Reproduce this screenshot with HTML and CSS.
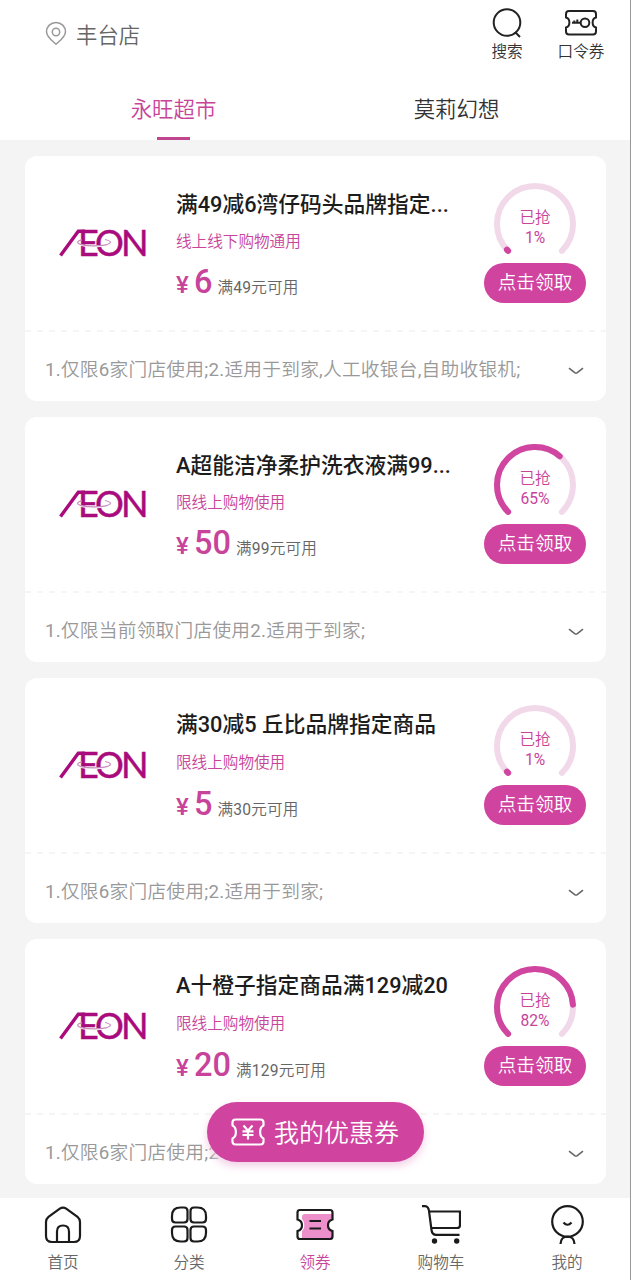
FILE: index.html
```html
<!DOCTYPE html>
<html lang="zh-CN">
<head>
<meta charset="utf-8">
<title>领券</title>
<link rel="stylesheet" href="styles.css">
</head>
<body>
<div class="app">
  <header class="header">
    <div class="topbar">
      <div class="store">
        <svg class="pin" viewBox="0 0 22 25"><path d="M11 23.200C7 19.500 1.500 15.800 1.500 10.700A9.500 9.300 0 0 1 20.500 10.700C20.500 15.800 15 19.500 11 23.200Z"/><circle cx="11" cy="11" r="3.700"/></svg>
        <span>丰台店</span>
      </div>
      <div class="actions">
        <a class="action">
          <svg class="action-icon" viewBox="0 0 32 32"><circle cx="16" cy="14.500" r="13.300"/><path d="M24 24L29 29"/></svg>
          <span>搜索</span>
        </a>
        <a class="action">
          <svg class="action-icon" viewBox="0 0 32 32"><path d="M4 3H28Q31 3 31 6V9.500C26.500 10.500 26.500 18.500 31 19.500V23.500Q31 26.500 28 26.500H4Q1 26.500 1 23.500V19.500C5.500 18.500 5.500 10.500 1 9.500V6Q1 3 4 3Z"/><circle cx="20" cy="14.800" r="4.300"/><path d="M7 14.800H15.500M9.300 14.500V12.500M12.300 14.500V11.500"/></svg>
          <span>口令券</span>
        </a>
      </div>
    </div>
    <nav class="tabs">
      <a class="tab tab-active">永旺超市</a>
      <a class="tab">莫莉幻想</a>
    </nav>
  </header>

  <main class="list">
    <article class="card">
      <div class="card-main">
        <svg class="logo" viewBox="0 0 92 32" aria-label="ÆON"><path class="logo-slash" d="M2.500 28.500L20.300 4.300H27"/><text x="20 37 63" y="28.500">EON</text><path class="logo-halo" d="M19.500 16C23 20.500 49 20.500 52.500 16"/><path class="logo-ring" d="M24 12.800C18 14 18.500 16.500 24 17.800C30 19.300 42 19.300 48 17.800C54 16.300 54 14 47 12.500"/></svg>
        <div class="info">
          <h2 class="title title-cut">满49减6湾仔码头品牌指定...</h2>
          <p class="scope">线上线下购物通用</p>
          <p class="price"><span class="yen">¥</span><strong>6</strong><span class="rule">满49元可用</span></p>
        </div>
        <div class="claim">
          <div class="gauge">
            <svg viewBox="0 0 84 84"><path class="track" d="M15.100 68.900A38 38 0 1 1 68.900 68.900"/><path class="fill" pathLength="100" stroke-dasharray="1 200" d="M15.100 68.900A38 38 0 1 1 68.900 68.900"/></svg>
            <p>已抢<br>1%</p>
          </div>
          <button class="get">点击领取</button>
        </div>
      </div>
      <div class="terms"><span>1.仅限6家门店使用;2.适用于到家,人工收银台,自助收银机;</span><svg class="chevron" viewBox="0 0 18 10"><path d="M2 2.200L7.700 6.600Q9 7.500 10.300 6.600L16 2.200"/></svg></div>
    </article>

    <article class="card">
      <div class="card-main">
        <svg class="logo" viewBox="0 0 92 32" aria-label="ÆON"><path class="logo-slash" d="M2.500 28.500L20.300 4.300H27"/><text x="20 37 63" y="28.500">EON</text><path class="logo-halo" d="M19.500 16C23 20.500 49 20.500 52.500 16"/><path class="logo-ring" d="M24 12.800C18 14 18.500 16.500 24 17.800C30 19.300 42 19.300 48 17.800C54 16.300 54 14 47 12.500"/></svg>
        <div class="info">
          <h2 class="title title-cut">A超能洁净柔护洗衣液满99...</h2>
          <p class="scope">限线上购物使用</p>
          <p class="price"><span class="yen">¥</span><strong>50</strong><span class="rule">满99元可用</span></p>
        </div>
        <div class="claim">
          <div class="gauge">
            <svg viewBox="0 0 84 84"><path class="track" d="M15.100 68.900A38 38 0 1 1 68.900 68.900"/><path class="fill" pathLength="100" stroke-dasharray="65 200" d="M15.100 68.900A38 38 0 1 1 68.900 68.900"/></svg>
            <p>已抢<br>65%</p>
          </div>
          <button class="get">点击领取</button>
        </div>
      </div>
      <div class="terms"><span>1.仅限当前领取门店使用2.适用于到家;</span><svg class="chevron" viewBox="0 0 18 10"><path d="M2 2.200L7.700 6.600Q9 7.500 10.300 6.600L16 2.200"/></svg></div>
    </article>

    <article class="card">
      <div class="card-main">
        <svg class="logo" viewBox="0 0 92 32" aria-label="ÆON"><path class="logo-slash" d="M2.500 28.500L20.300 4.300H27"/><text x="20 37 63" y="28.500">EON</text><path class="logo-halo" d="M19.500 16C23 20.500 49 20.500 52.500 16"/><path class="logo-ring" d="M24 12.800C18 14 18.500 16.500 24 17.800C30 19.300 42 19.300 48 17.800C54 16.300 54 14 47 12.500"/></svg>
        <div class="info">
          <h2 class="title">满30减5 丘比品牌指定商品</h2>
          <p class="scope">限线上购物使用</p>
          <p class="price"><span class="yen">¥</span><strong>5</strong><span class="rule">满30元可用</span></p>
        </div>
        <div class="claim">
          <div class="gauge">
            <svg viewBox="0 0 84 84"><path class="track" d="M15.100 68.900A38 38 0 1 1 68.900 68.900"/><path class="fill" pathLength="100" stroke-dasharray="1 200" d="M15.100 68.900A38 38 0 1 1 68.900 68.900"/></svg>
            <p>已抢<br>1%</p>
          </div>
          <button class="get">点击领取</button>
        </div>
      </div>
      <div class="terms"><span>1.仅限6家门店使用;2.适用于到家;</span><svg class="chevron" viewBox="0 0 18 10"><path d="M2 2.200L7.700 6.600Q9 7.500 10.300 6.600L16 2.200"/></svg></div>
    </article>

    <article class="card">
      <div class="card-main">
        <svg class="logo" viewBox="0 0 92 32" aria-label="ÆON"><path class="logo-slash" d="M2.500 28.500L20.300 4.300H27"/><text x="20 37 63" y="28.500">EON</text><path class="logo-halo" d="M19.500 16C23 20.500 49 20.500 52.500 16"/><path class="logo-ring" d="M24 12.800C18 14 18.500 16.500 24 17.800C30 19.300 42 19.300 48 17.800C54 16.300 54 14 47 12.500"/></svg>
        <div class="info">
          <h2 class="title">A十橙子指定商品满129减20</h2>
          <p class="scope">限线上购物使用</p>
          <p class="price"><span class="yen">¥</span><strong>20</strong><span class="rule">满129元可用</span></p>
        </div>
        <div class="claim">
          <div class="gauge">
            <svg viewBox="0 0 84 84"><path class="track" d="M15.100 68.900A38 38 0 1 1 68.900 68.900"/><path class="fill" pathLength="100" stroke-dasharray="82 200" d="M15.100 68.900A38 38 0 1 1 68.900 68.900"/></svg>
            <p>已抢<br>82%</p>
          </div>
          <button class="get">点击领取</button>
        </div>
      </div>
      <div class="terms"><span>1.仅限6家门店使用;2</span><svg class="chevron" viewBox="0 0 18 10"><path d="M2 2.200L7.700 6.600Q9 7.500 10.300 6.600L16 2.200"/></svg></div>
    </article>
  </main>

  <a class="my-coupons">
    <svg class="my-icon" viewBox="0 0 34 28"><path d="M4.500 1.500H29.500Q32.500 1.500 32.500 4.500V7.500C28 9.500 28 18.500 32.500 20.500V23.500Q32.500 26.500 29.500 26.500H4.500Q1.500 26.500 1.500 23.500V20.500C6 18.500 6 9.500 1.500 7.500V4.500Q1.500 1.500 4.500 1.500Z"/><path d="M12.500 7.500L17 12.800L21.500 7.500M17 12.800V21.500M11.500 13.300H22.500M11.500 17H22.500"/></svg>
    <span>我的优惠券</span>
  </a>

  <nav class="tabbar">
    <a class="nav-item">
      <svg class="nav-icon" viewBox="0 0 40 40"><path d="M16.800 3.600Q20 1.500 23.200 3.600L34.500 11.800Q37 13.800 37 17V31Q37 37 31 37H9Q3 37 3 31V17Q3 13.800 5.500 11.800Z"/><path d="M14 37V26.500Q14 20.500 20 20.500T26 26.500V37"/></svg>
      <span>首页</span>
    </a>
    <a class="nav-item">
      <svg class="nav-icon" viewBox="0 0 40 40"><path d="M11.500 2.500H15Q18.500 2.500 18.500 6V14Q18.500 17.500 15 17.500H6.500Q3 17.500 3 14V11Q3 2.500 11.500 2.500ZM25 2.500H28.500Q37 2.500 37 11V14Q37 17.500 33.500 17.500H25Q21.500 17.500 21.500 14V6Q21.500 2.500 25 2.500ZM6.500 21.500H15Q18.500 21.500 18.500 25V33Q18.500 36.500 15 36.500H11.500Q3 36.500 3 28V25Q3 21.500 6.500 21.500ZM25 21.500H33.500Q37 21.500 37 25V28Q37 36.500 28.500 36.500H25Q21.500 36.500 21.500 33V25Q21.500 21.500 25 21.500Z"/></svg>
      <span>分类</span>
    </a>
    <a class="nav-item nav-active">
      <svg class="nav-icon" viewBox="0 0 40 40"><path class="tint" d="M10 9H37V14C33 16 32 24 37 26V35H7V26C10 24 10 17 7 14V12Q7 9 10 9Z"/><path d="M5 5H35Q37.500 5 37.500 7.500V14.500C31.500 16 31.500 24.500 37.500 26V31.500Q37.500 34 35 34H5Q2.500 34 2.500 31.500V26C8.500 24.500 8.500 16 2.500 14.500V7.500Q2.500 5 5 5Z"/><path d="M14.500 16H26M14.500 23.500H26"/></svg>
      <span>领券</span>
    </a>
    <a class="nav-item">
      <svg class="nav-icon" viewBox="0 0 40 40"><path d="M1 1.200H4Q7.500 1.500 8 6L10.500 25Q11.200 29.800 15 29.800H38.500M8.300 6.500H39V20Q39 23 36 23H10.300"/><circle class="dot" cx="13.500" cy="36" r="2.700"/><circle class="dot" cx="35.700" cy="36" r="2.700"/></svg>
      <span>购物车</span>
    </a>
    <a class="nav-item">
      <svg class="nav-icon" viewBox="0 0 40 40"><circle cx="20.500" cy="16.500" r="15.300"/><path d="M16.500 17.500Q20.500 22 24.500 17.500M13.500 39Q14 31.500 20.500 31.500T27.500 39"/></svg>
      <span>我的</span>
    </a>
  </nav>
</div>
</body>
</html>
```

FILE: styles.css
```css
* { box-sizing: border-box; margin: 0; padding: 0; }
body {
  font-family: Roboto, "Noto Sans CJK SC DemiLight", "Noto Sans CJK SC", sans-serif;
  font-size: 15.6px;
  color: #666;
  background: #f4f4f4;
}
.app {
  position: relative;
  display: flex;
  flex-direction: column;
  height: 1280px;
  overflow: hidden;
  border-right: 1px solid #999;
}
.header { flex: none; height: 140px; background: #fff; }
.topbar { display: flex; justify-content: space-between; height: 79px; padding: 8px 22px 0 45px; }
.store { display: flex; align-items: center; gap: 9px; height: 51px; font-size: 21.4px; }
.pin { width: 22px; height: 25px; fill: none; stroke: #999; stroke-width: 1.5; }
.actions { display: flex; gap: 20px; }
.action { display: flex; flex-direction: column; align-items: center; width: 54px; line-height: 20px; color: #333; }
.action-icon { width: 32px; height: 32px; margin-bottom: 2px; fill: none; stroke: #222; stroke-width: 2; }
.tabs { display: grid; grid-template-columns: 283px 283px; justify-content: center; height: 61px; }
.tab { display: flex; flex-direction: column; align-items: center; height: 61px; line-height: 62px; font-size: 21.4px; color: #333; }
.tab-active { color: #c8439a; }
.tab-active::after { content: ""; width: 33px; height: 3px; margin-top: -4px; background: #c0458f; }

.list { flex: 1; min-height: 0; display: flex; flex-direction: column; gap: 16px; padding: 16px 24px 0 25px; overflow: hidden; }
.card { flex: none; height: 245px; border-radius: 12px; background: #fff; }
.card-main { display: flex; height: 174px; padding: 26px 20px 0 33px; }
.logo { flex: none; width: 92px; height: 32px; margin-top: 45px; overflow: visible; font: 36px Lato, sans-serif; fill: #a90b7c; }
.logo text { stroke: #a90b7c; stroke-width: .5; }
.logo-slash { fill: none; stroke: #a90b7c; stroke-width: 3.4; }
.logo-halo { fill: none; stroke: #fff; stroke-width: 2; }
.logo-ring { fill: none; stroke: #c78dba; stroke-width: 1.2; }
.info { width: 300px; padding-left: 26px; white-space: nowrap; }
.title { height: 44px; line-height: 41px; font-family: Roboto, "Noto Sans CJK SC", sans-serif; font-size: 21.75px; font-weight: 500; color: #1c1c1c; }
.title-cut { line-height: 45px; }
.scope { height: 30px; line-height: 31px; color: #c8439a; }
.title-cut + .scope { line-height: 32px; }
.price { display: flex; align-items: baseline; height: 50px; line-height: 52px; color: #c8439a; }
.yen { width: 18px; font-size: 24px; font-weight: 500; }
.price strong { font-size: 32.5px; font-weight: 500; }
.rule { margin-left: 5px; letter-spacing: .2px; color: #666; }
.claim { display: flex; flex-direction: column; align-items: center; width: 102px; margin-left: auto; }
.gauge { display: grid; width: 84px; height: 84px; margin-bottom: -3px; }
.gauge svg { grid-area: 1 / 1; width: 84px; height: 84px; fill: none; stroke-width: 6; stroke-linecap: round; }
.gauge p { grid-area: 1 / 1; align-self: center; text-align: center; line-height: 20px; padding-top: 7px; color: #c8439a; }
.track { stroke: #f2d9ea; }
.fill { stroke: #cf459f; }
.get { width: 102px; height: 40px; border: 0; border-radius: 20px; background: #d0439f; color: #fff; font-family: inherit; font-size: 18.7px; line-height: 40px; }
.terms { display: flex; align-items: center; justify-content: space-between; height: 71px; padding: 4px 21px 0 20px; font-size: 18.7px; letter-spacing: .25px; color: #999; background: repeating-linear-gradient(90deg, #f5f5f5 0 6px, #fff 6px 12px) 0 0 / 100% 2px no-repeat; }
.chevron { width: 18px; height: 10px; margin-top: 6px; fill: none; stroke: #666; stroke-width: 1.6; }

.my-coupons {
  position: absolute;
  left: 207px;
  top: 1102px;
  z-index: 2;
  display: flex;
  align-items: center;
  gap: 9px;
  width: 217px;
  height: 60px;
  padding: 0 0 2px 24px;
  border-radius: 30px;
  background: #d0439f;
  box-shadow: 0 4px 8px #f2cfe5;
  color: #fff;
  font-size: 25px;
}
.my-icon { width: 34px; height: 28px; margin-top: 2px; fill: none; stroke: #fff; stroke-width: 2.2; stroke-linejoin: round; }
.tabbar { flex: none; display: grid; grid-template-columns: repeat(5, 1fr); height: 82px; padding-top: 7px; background: #fff; }
.nav-item { display: flex; flex-direction: column; align-items: center; line-height: 20px; }
.nav-icon { width: 40px; height: 40px; margin-bottom: 8px; fill: none; stroke: #1b1b1b; stroke-width: 2.2; }
.nav-icon .dot { fill: #1b1b1b; stroke: none; }
.nav-icon .tint { fill: #ec8fcb; stroke: none; }
.nav-active { color: #c8439a; }
```
